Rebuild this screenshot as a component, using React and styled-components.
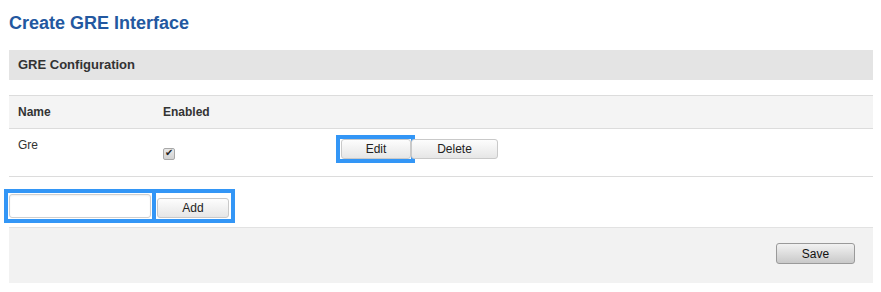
import React from "react";
import styled, { createGlobalStyle } from "styled-components";

const GlobalStyle = createGlobalStyle`
  body {
    margin: 0;
    background: #fff;
    font-family: "Liberation Sans", Arial, sans-serif;
    color: #333;
  }
`;

const rows = [{ name: "Gre", enabled: true }];

const App = () => {
  return (
    <Page>
      <GlobalStyle />
      <Title>Create GRE Interface</Title>
      <SectionHead>GRE Configuration</SectionHead>
      <Table>
        <HeadRow>
          <NameCell>Name</NameCell>
          <EnabledCell>Enabled</EnabledCell>
          <ActionCell />
        </HeadRow>
        {rows.map((row) => (
          <DataRow key={row.name}>
            <NameCell>{row.name}</NameCell>
            <EnabledCell>
              <Check checked={row.enabled} readOnly type="checkbox" />
            </EnabledCell>
            <ActionCell>
              <Marked>
                <Button width="70px">Edit</Button>
              </Marked>
              <Button width="87px">Delete</Button>
            </ActionCell>
          </DataRow>
        ))}
      </Table>
      <AddRow>
        <Marked pad="1px">
          <TextInput type="text" />
        </Marked>
        <AddBox>
          <Button width="72px">Add</Button>
        </AddBox>
      </AddRow>
      <Footer>
        <SaveButton>Save</SaveButton>
      </Footer>
    </Page>
  );
};

const Page = styled.div`
  width: 864px;
  padding: 0 0 0 9px;
`;

const Title = styled.h2`
  margin: 0;
  padding-top: 12px;
  height: 38px;
  font-size: 18px;
  line-height: 22px;
  font-weight: 700;
  color: #2358a0;
`;

const SectionHead = styled.div`
  height: 30px;
  line-height: 30px;
  background: #e4e4e4;
  padding-left: 9px;
  font-size: 13px;
  font-weight: 700;
  color: #333;
`;

const Table = styled.div`
  margin-top: 15px;
  border-top: 1px solid #dcdcdc;
`;

const HeadRow = styled.div`
  display: flex;
  align-items: center;
  height: 32px;
  background: #f4f4f4;
  border-bottom: 1px solid #dcdcdc;
  font-size: 12px;
  font-weight: 700;
`;

const DataRow = styled.div`
  display: flex;
  align-items: flex-start;
  height: 47px;
  border-bottom: 1px solid #dcdcdc;
  font-size: 12px;
`;

const NameCell = styled.div`
  width: 145px;
  padding-left: 9px;
  ${DataRow} & {
    padding-top: 9px;
    line-height: 14px;
  }
`;

const EnabledCell = styled.div`
  width: 177px;
  ${DataRow} & {
    padding-top: 19px;
  }
`;

const ActionCell = styled.div`
  display: flex;
  align-items: center;
  padding-top: 10px;
  ${HeadRow} & {
    padding-top: 0;
  }
`;

const Check = styled.input`
  appearance: none;
  position: relative;
  display: block;
  margin: 0;
  width: 12px;
  height: 12px;
  box-sizing: border-box;
  border: 1px solid #a8a8a8;
  border-radius: 2px;
  background: linear-gradient(#e8e8e8, #d2d2d2);
  &:checked::after {
    content: "✔";
    position: absolute;
    left: 1px;
    top: -2px;
    font-size: 10px;
    line-height: 12px;
    color: #222;
  }
`;

const Marked = styled.span`
  display: inline-flex;
  padding: ${(props) => props.pad || "0 0 0 1px"};
  outline: 4px solid #3396f6;
`;

const Button = styled.button`
  width: ${(props) => props.width};
  height: 20px;
  padding: 0;
  border: 1px solid #c9c9c9;
  border-radius: 3px;
  background: linear-gradient(#fdfdfd, #e6e6e6);
  font-family: "Liberation Sans", Arial, sans-serif;
  font-size: 12px;
  color: #222;
`;

const AddRow = styled.div`
  display: flex;
  align-items: flex-start;
  gap: 4px;
  height: 50px;
  padding-top: 16px;
  box-sizing: border-box;
  margin-left: -1px;
`;

const AddBox = styled(Marked)`
  width: 75px;
  height: 26px;
  box-sizing: border-box;
  padding: 5px 0 0 1px;
  align-items: flex-start;
`;

const TextInput = styled.input`
  width: 142px;
  height: 24px;
  box-sizing: border-box;
  margin: 0;
  border: 1px solid #cfcfcf;
  border-radius: 3px;
  background: #fff;
  box-shadow: inset 0 1px 2px rgba(0, 0, 0, 0.06);
`;

const Footer = styled.div`
  display: flex;
  justify-content: flex-end;
  align-items: flex-start;
  height: 56px;
  border-top: 1px solid #e2e2e2;
  background: #f2f2f2;
  padding: 15px 18px 0 0;
  box-sizing: border-box;
`;

const SaveButton = styled.button`
  width: 79px;
  height: 21px;
  padding: 0;
  border: 1px solid #9a9a9a;
  border-radius: 3px;
  background: linear-gradient(#f2f2f2, #c9c9c9);
  font-family: "Liberation Sans", Arial, sans-serif;
  font-size: 12px;
  color: #111;
`;

export default App;
